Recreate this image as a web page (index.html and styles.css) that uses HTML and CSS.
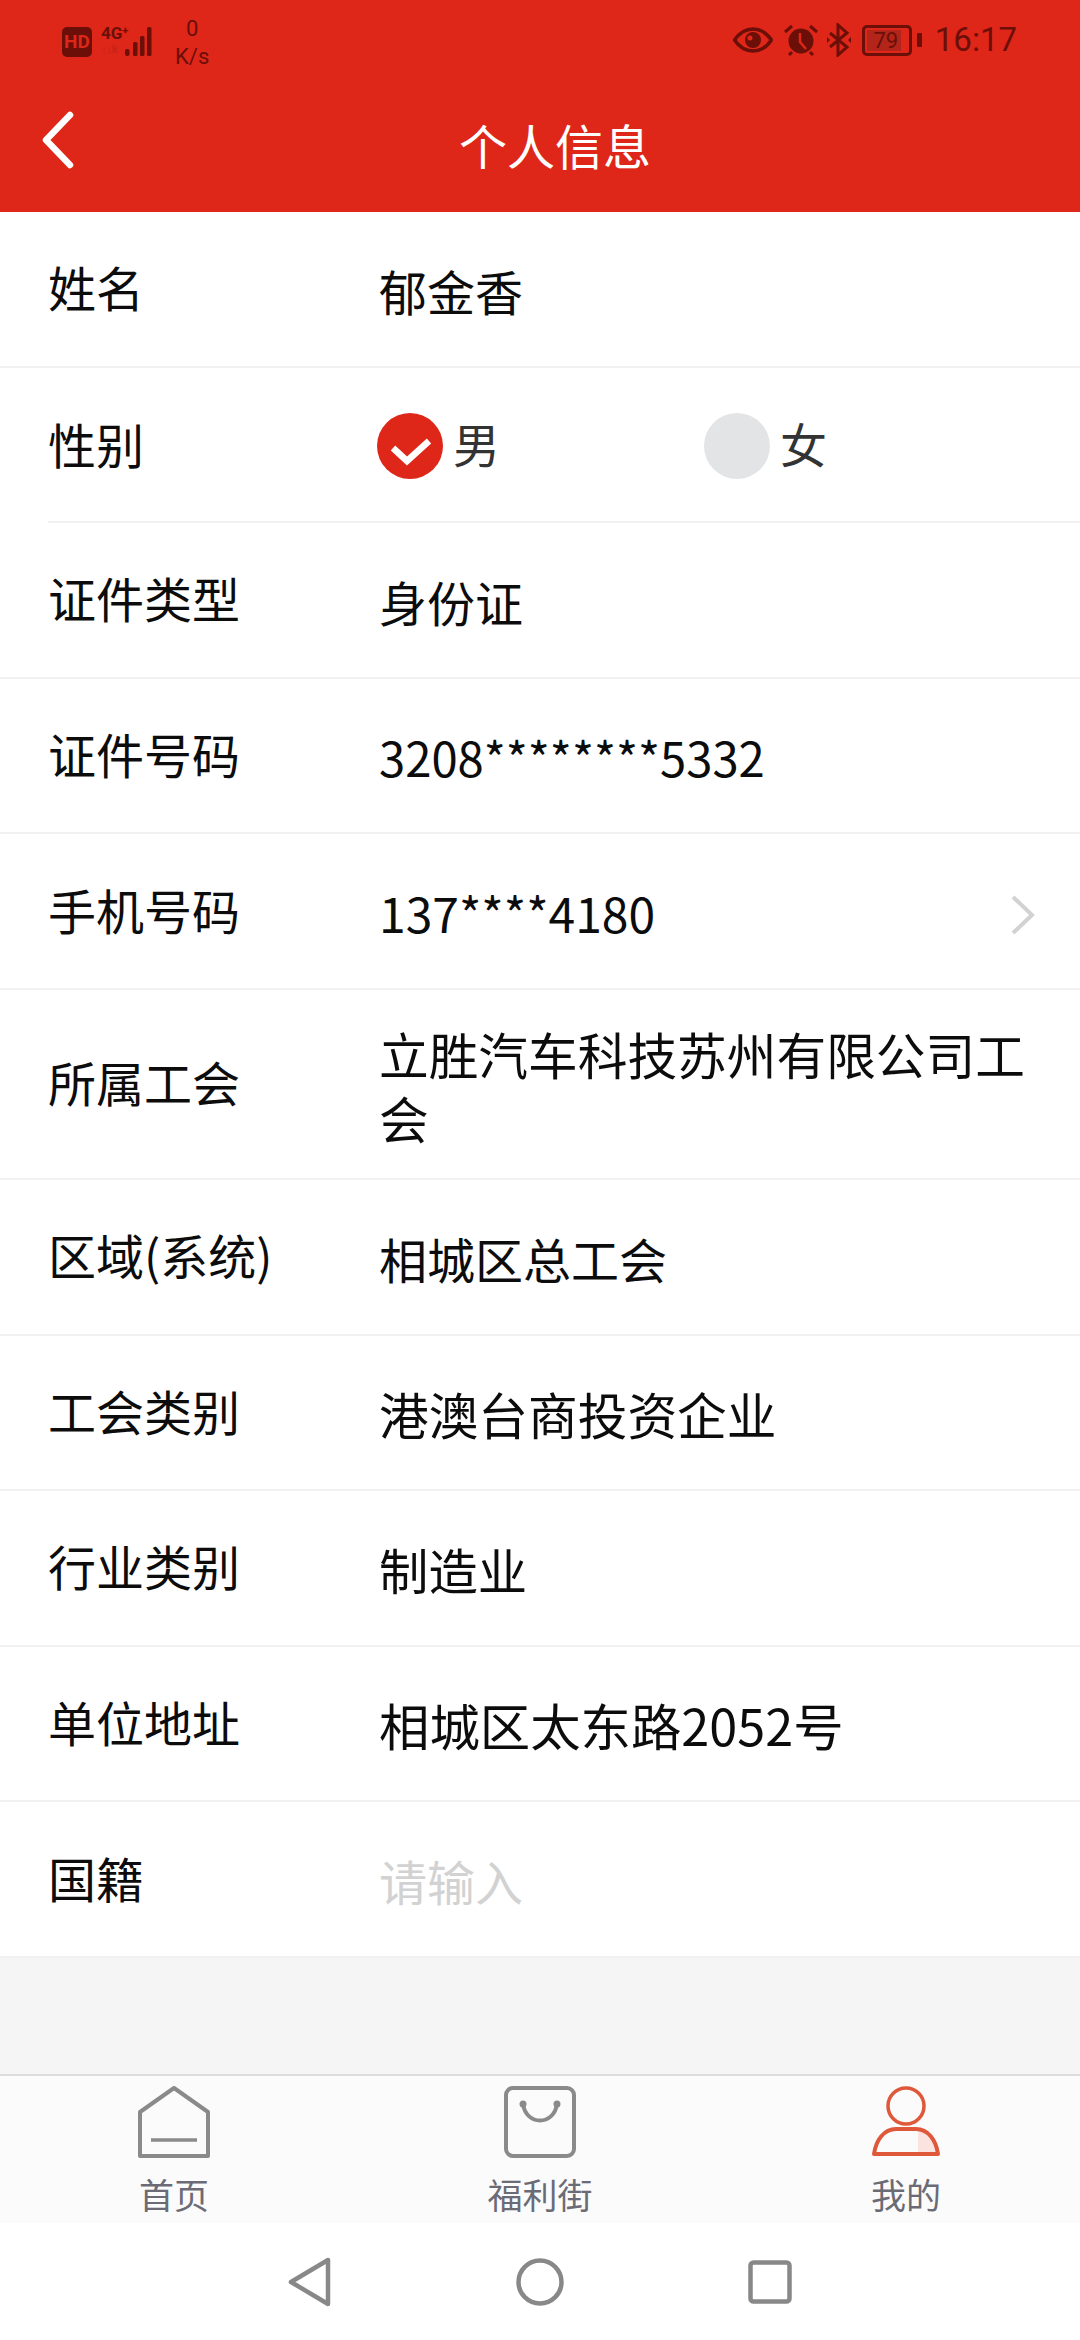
FILE: index.html
```html
<!DOCTYPE html>
<html lang="zh-CN">
<head>
<meta charset="utf-8">
<title>个人信息</title>
<link rel="stylesheet" href="styles.css">
</head>
<body>
<div class="screen">
  <header class="header">
    <div class="status">
      <div class="status-left">
        <span class="hd">HD</span>
        <span class="net">
          <span class="net-labels"><span class="net-type">4G<sup>+</sup></span><span class="net-up">↑↓k</span></span>
          <svg class="signal" viewBox="0 0 32 32" width="34" height="32"><rect x="0" y="24" width="4.5" height="7" rx="2"/><rect x="8" y="17" width="4.5" height="14" rx="1.5"/><rect x="15" y="11" width="4.5" height="20" rx="1.5"/><rect x="22" y="2" width="4.5" height="29" rx="1.5"/></svg>
        </span>
        <span class="speed"><span>0</span><span>K/s</span></span>
      </div>
      <div class="status-right">
        <svg class="st-ic eye" viewBox="0 0 40 26" width="40" height="26"><path d="M1.5 13C7 5 13 2 20 2s13 3 18.500 11C33 21 27 24 20 24S7 21 1.500 13Z" fill="none" stroke="#6b0f08" stroke-width="3.500"/><circle cx="20" cy="13" r="8" fill="#6b0f08"/><circle cx="17" cy="11" r="2.500" fill="#de2619"/></svg>
        <svg class="st-ic alarm" viewBox="0 0 34 32" width="34" height="32"><circle cx="17" cy="17" r="12.500" fill="#6b0f08"/><path d="M1 8 8 2M33 8 26 2M8 28l-3 3M26 28l3 3" stroke="#6b0f08" stroke-width="3" fill="none"/><path d="M16 9v9l6 7" stroke="#de2619" stroke-width="2.500" fill="none"/></svg>
        <svg class="st-ic bt" viewBox="0 0 24 34" width="24" height="34"><path d="M3 10 20 24l-9 8V2l9 8L3 24" fill="none" stroke="#6b0f08" stroke-width="3"/><path d="M0 14v6l3-3ZM24 14v6l-3-3Z" fill="#6b0f08"/></svg>
        <span class="battery"><span class="batt-body"><span class="batt-fill"></span><span class="batt-num">79</span></span><span class="batt-cap"></span></span>
        <span class="time">16:17</span>
      </div>
    </div>
    <div class="titlebar">
      <svg class="back" viewBox="0 0 34 58" width="34" height="58"><path d="M29 4 5 29l24 25" fill="none" stroke="#fff" stroke-width="6.500" stroke-linecap="round" stroke-linejoin="round"/></svg>
      <h1 class="title">个人信息</h1>
    </div>
  </header>

  <main class="content">
    <div class="row row-full"><span class="label">姓名</span><span class="value">郁金香</span></div>
    <div class="row row-inset"><span class="label">性别</span>
      <div class="genders">
        <span class="gender gender-m"><span class="radio radio-on"><svg viewBox="0 0 66 66" width="66" height="66"><path d="M16 35 30 48 52 28" fill="none" stroke="#fff" stroke-width="6.500"/></svg></span><span class="gender-text">男</span></span>
        <span class="gender"><span class="radio"></span><span class="gender-text">女</span></span>
      </div>
    </div>
    <div class="row row-full"><span class="label">证件类型</span><span class="value">身份证</span></div>
    <div class="row row-full"><span class="label">证件号码</span><span class="value value-num">3208********5332</span></div>
    <div class="row row-full"><span class="label">手机号码</span><span class="value">137****4180</span>
      <svg class="more" viewBox="0 0 26 42" width="26" height="42"><path d="M3 3 22 21 3 39" fill="none" stroke="#d2d2d2" stroke-width="4"/></svg>
    </div>
    <div class="row row-full row-tall"><span class="label">所属工会</span><span class="value value-lg value-wrap">立胜汽车科技苏州有限公司工会</span></div>
    <div class="row row-full"><span class="label">区域(系统)</span><span class="value">相城区总工会</span></div>
    <div class="row row-full"><span class="label">工会类别</span><span class="value value-lg">港澳台商投资企业</span></div>
    <div class="row row-full"><span class="label">行业类别</span><span class="value value-md">制造业</span></div>
    <div class="row row-full"><span class="label">单位地址</span><span class="value value-xl">相城区太东路2052号</span></div>
    <div class="row row-full"><span class="label">国籍</span><span class="value value-empty">请输入</span></div>
  </main>

  <nav class="tabs">
    <div class="tab">
      <svg viewBox="0 0 72 72" width="72" height="72"><path d="M2 70V26L36 2l34 24v44Z" fill="none" stroke="#8a8a8a" stroke-width="4" stroke-linejoin="round"/><path d="M13 54h46" stroke="#8a8a8a" stroke-width="3.500"/></svg>
      <span class="tab-text">首页</span>
    </div>
    <div class="tab">
      <svg viewBox="0 0 72 72" width="72" height="72"><rect x="2" y="2" width="68" height="68" rx="7" fill="none" stroke="#8a8a8a" stroke-width="4"/><path d="M19 18c3 22 31 22 34 0" fill="none" stroke="#8a8a8a" stroke-width="4"/><circle cx="19" cy="18" r="3.500" fill="#8a8a8a"/><circle cx="53" cy="18" r="3.500" fill="#8a8a8a"/></svg>
      <span class="tab-text">福利街</span>
    </div>
    <div class="tab">
      <svg viewBox="0 0 72 72" width="72" height="72"><circle cx="36" cy="20" r="18" fill="none" stroke="#e0583a" stroke-width="3.500"/><path d="M52 44h-4v24h22C68 56 62 46 52 44Z" fill="#fbe3df"/><path d="M4 68c2-14 10-25 22-25h20c12 0 20 11 22 25Z" fill="none" stroke="#e0583a" stroke-width="4" stroke-linejoin="round"/></svg>
      <span class="tab-text">我的</span>
    </div>
  </nav>

  <div class="sysnav">
    <svg viewBox="0 0 44 50" width="44" height="50"><path d="M3 25 40 3v44Z" fill="none" stroke="#888" stroke-width="4.500" stroke-linejoin="round"/></svg>
    <svg viewBox="0 0 48 48" width="48" height="48"><circle cx="24" cy="24" r="21.500" fill="none" stroke="#888" stroke-width="4.500"/></svg>
    <svg viewBox="0 0 44 44" width="44" height="44"><rect x="2.500" y="2.500" width="39" height="39" rx="3" fill="none" stroke="#888" stroke-width="4.500"/></svg>
  </div>
</div>
</body>
</html>
```

FILE: styles.css
```css
* { box-sizing: border-box; }
html, body { margin: 0; padding: 0; }
body {
  font-family: "Noto Sans CJK SC", "Noto Sans", sans-serif;
  background: #f5f5f5;
}
.screen {
  width: 1080px;
  height: 2340px;
  display: flex;
  flex-direction: column;
  overflow: hidden;
}
.header {
  height: 212px;
  background: #de2619;
  flex: none;
}
.status {
  height: 68px;
  padding: 14px 63px 0 62px;
  display: flex;
  justify-content: space-between;
  color: #6b0f08;
}
.status-left { display: flex; align-items: flex-start; }
.hd {
  width: 30px;
  height: 30px;
  margin-top: 13px;
  background: #6b0f08;
  color: #de2619;
  border-radius: 5px;
  font: 700 19px/30px "Roboto", sans-serif;
  text-align: center;
}
.net { display: flex; margin: 11px 0 0 9px; height: 34px; }
.net-labels { display: flex; flex-direction: column; width: 24px; }
.net-type { font: 700 17px/17px "Roboto", sans-serif; white-space: nowrap; }
.net-type sup { font-size: 11px; line-height: 0; vertical-align: 5px; }
.net-up { font: 700 11px/16px "Roboto", sans-serif; color: #c5241a; white-space: nowrap; }
.signal { fill: #6b0f08; flex: none; margin-left: -1px; }
.speed {
  display: flex;
  flex-direction: column;
  align-items: center;
  margin-left: 17px;
  font: 400 22px/28px "Roboto", sans-serif;
  margin-top: 1px;
}
.status-right { display: flex; align-items: center; height: 52px; }
.st-ic { flex: none; }
.eye { margin-right: 11px; }
.alarm { margin-right: 9px; }
.bt { margin-right: 11px; }
.battery { display: flex; align-items: center; }
.batt-body {
  position: relative;
  width: 50px;
  height: 31px;
  border: 3px solid #6b0f08;
  border-radius: 5px;
  display: block;
}
.batt-fill {
  position: absolute;
  left: 2px;
  top: 2px;
  bottom: 2px;
  width: 34px;
  background: #b3241a;
}
.batt-num {
  position: absolute;
  inset: 0;
  font: 400 22px/25px "Roboto", sans-serif;
  text-align: center;
  margin-left: -2px;
}
.batt-cap { width: 5px; height: 14px; margin-left: 5px; background: #6b0f08; border-radius: 1px; }
.time {
  margin-left: 13px;
  font: 400 33px/40px "Roboto", sans-serif;
  color: #6b0f08;
}
.titlebar {
  height: 144px;
  padding-left: 41px;
  display: flex;
  align-items: center;
  position: relative;
}
.back { flex: none; }
.title {
  position: absolute;
  left: 30px;
  right: 0;
  top: 48px;
  margin: 0;
  color: #fff;
  font-size: 48px;
  font-weight: 400;
  line-height: 56px;
  text-align: center;
}
.content {
  flex: 1;
  display: flex;
  flex-direction: column;
}
.row {
  height: 155.6px;
  flex: none;
  display: flex;
  align-items: center;
  background: #fff;
  padding-left: 48px;
  padding-right: 30px;
  position: relative;
}
.row-full { border-bottom: 2px solid #f1f1f1; }
.row-inset::after {
  content: "";
  position: absolute;
  left: 48px;
  right: 0;
  bottom: 0;
  height: 2px;
  background: #f1f1f1;
}
.row-tall { height: 190px; }
.label {
  width: 331px;
  flex: none;
  font-size: 48px;
  line-height: 64px;
  margin-bottom: 5px;
  color: #0c0c0c;
  white-space: nowrap;
}
.value {
  flex: 1;
  font-size: 48px;
  line-height: 64px;
  color: #0c0c0c;
  padding-top: 2px;
  white-space: nowrap;
}
.value-num { font-size: 47.2px; }
.value-md { font-size: 49.4px; }
.value-lg { font-size: 49.7px; }
.value-xl { font-size: 50.4px; }
.value-wrap { white-space: normal; padding-top: 3px; line-height: 64.5px; }
.value-empty { color: #d2d2d2; }
.more { flex: none; margin-right: 14px; margin-top: 7px; }
.genders { display: flex; margin-left: -2px; margin-top: 2px; }
.gender { display: flex; align-items: center; width: 327px; }
.radio {
  width: 66px;
  height: 66px;
  border-radius: 50%;
  background: #e3e4e5;
  flex: none;
  display: block;
}
.radio-on { background: #de2619; }
.radio svg { display: block; }
.gender-text { margin: 0 0 6px 10px; font-size: 47px; line-height: 60px; color: #333; }
.tabs {
  height: 149px;
  flex: none;
  display: grid;
  grid-template-columns: 348px 384px 348px;
  background: #fbfbfb;
  border-top: 2px solid #dcdcdc;
}
.tab {
  display: flex;
  flex-direction: column;
  align-items: center;
  padding-top: 10px;
}
.tab svg { display: block; }
.tab-text { margin-top: 12px; font-size: 35px; line-height: 48px; color: #6b6b76; }
.sysnav {
  height: 117px;
  flex: none;
  background: #fff;
  display: grid;
  grid-template-columns: repeat(3, 230px);
  justify-content: center;
  justify-items: center;
  align-items: center;
}
```
